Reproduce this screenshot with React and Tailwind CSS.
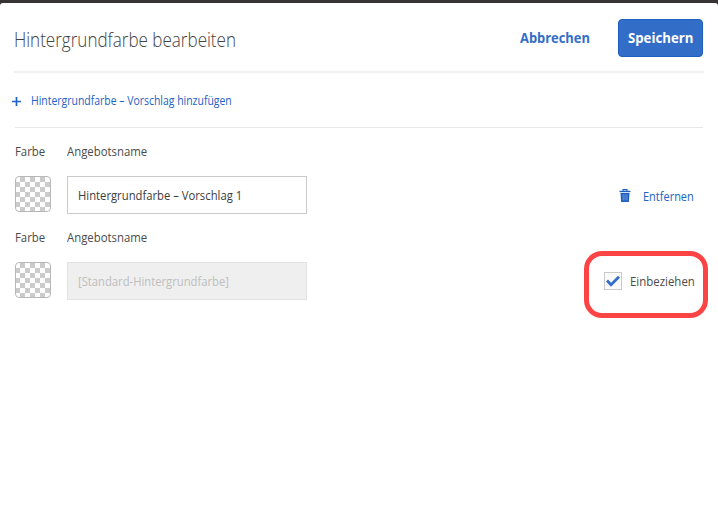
import { useLayoutEffect, useRef, useState } from "react";

// Condenses a line of text horizontally so that it fills its box.
function Fit({ className = "", children }) {
  const box = useRef(null);
  const text = useRef(null);
  const [scale, setScale] = useState(1);
  useLayoutEffect(() => {
    setScale(box.current.clientWidth / text.current.offsetWidth);
  }, []);
  return (
    <span ref={box} className={`block shrink-0 whitespace-nowrap ${className}`}>
      <span ref={text} className="inline-block origin-left" style={{ transform: `scaleX(${scale})` }}>
        {children}
      </span>
    </span>
  );
}

function Swatch() {
  return (
    <div className="h-9 w-9 shrink-0 overflow-hidden rounded-[4px] border border-[#b8b8b8] bg-[conic-gradient(#cbcbcb_25%,#fff_0_50%,#cbcbcb_0_75%,#fff_0)] bg-[length:10px_10px] bg-[position:-1px_0px]" />
  );
}

function Labels() {
  return (
    <div className="flex h-6 items-center pl-[15px] text-[12.5px] leading-6 text-[#4b4b4b]">
      <Fit className="w-[30px]">Farbe</Fit>
      <Fit className="ml-[22px] w-[80px]">Angebotsname</Fit>
    </div>
  );
}

function TrashIcon() {
  return (
    <svg className="h-[13px] w-[12px] shrink-0" viewBox="0 0 12 13" fill="none">
      <path d="M4 2V.6h4V2" stroke="#1d5fc0" strokeWidth="1.1" />
      <path d="M.5 1.8h11v1.4H.5z" fill="#1d5fc0" />
      <path d="M1.5 4h9l-.6 9H2.1z" fill="#1d5fc0" />
      <path d="M4.1 5.3v6.2M6 5.3v6.2M7.9 5.3v6.2" stroke="#8fb2e6" strokeWidth=".7" />
    </svg>
  );
}

export default function App() {
  return (
    <div className="h-[527px] w-[718px] overflow-hidden bg-[#363434] pt-[3px] font-['Open_Sans',sans-serif]">
      <div className="h-[524px] rounded-t-[3px] bg-white">
        <header className="ml-[14px] flex h-[70px] w-[690px] border-b-2 border-[#f1f1f1]">
          <h1 className="mt-[17px] text-[19.5px] leading-10 font-light text-[#424242]">
            <Fit className="w-[222px]">Hintergrundfarbe bearbeiten</Fit>
          </h1>
          <button className="mt-4 ml-[284px] h-[38px] pb-[2px] text-[14px] font-bold text-[#326ec8]">
            <Fit className="w-[70px] text-left">Abbrechen</Fit>
          </button>
          <button className="mt-4 ml-7 flex h-[38px] w-[85px] items-center rounded-[4px] border border-[#1f5fbf] bg-[#326ec8] pb-[2px] pl-[9px] text-[14px] font-bold text-white">
            <Fit className="w-[65px] text-left">Speichern</Fit>
          </button>
        </header>

        <div className="ml-[15px] flex h-[55px] w-[688px] items-center border-b border-[#e8e8e8] pt-[2px] text-[#1d62c4]">
          <svg className="-ml-[3px] h-[9px] w-[9px] shrink-0" viewBox="0 0 9 9">
            <path d="M4.5 0v9M0 4.5h9" stroke="#1d62c4" strokeWidth="1.7" />
          </svg>
          <Fit className="ml-[10px] w-[201px] text-[12px] font-medium">Hintergrundfarbe – Vorschlag hinzufügen</Fit>
        </div>

        <div className="pt-3">
          <Labels />
        </div>
        <div className="mt-3 flex h-[38px] pl-[15px]">
          <Swatch />
          <div className="ml-4 flex w-60 items-center border border-[#cacaca] pt-[2px] pl-[10px] text-[12.5px] text-[#3c3c3c]">
            <Fit className="w-[164px]">Hintergrundfarbe – Vorschlag 1</Fit>
          </div>
          <div className="ml-[312px] flex items-center pt-[4px] text-[12.5px] text-[#2063c4]">
            <div className="-mt-1">
              <TrashIcon />
            </div>
            <Fit className="ml-[12px] w-[51px]">Entfernen</Fit>
          </div>
        </div>

        <div className="mt-3">
          <Labels />
        </div>
        <div className="mt-3 flex pl-[15px]">
          <Swatch />
          <div className="ml-4 flex h-[38px] w-60 items-center border border-[#e2e2e2] bg-[#efefef] pt-[2px] pl-[10px] text-[12.5px] font-medium text-[#bebebe]">
            <Fit className="w-[151px]">[Standard-Hintergrundfarbe]</Fit>
          </div>
          <div className="-mt-[11px] ml-[277px] flex h-[67px] w-[124px] items-start rounded-[18px] border-[5px] border-[#fc4444] pt-4 pl-[15px] text-[12.5px] leading-[18px] text-[#4b4b4b]">
            <div className="flex h-[18px] w-[18px] shrink-0 items-center justify-center border border-[#cacaca] bg-[#fafafa]">
              <svg className="h-4 w-4 shrink-0" viewBox="0 0 16 16" fill="none">
                <path d="M2 7.6l4 4.1L14 3.8" stroke="#326ec8" strokeWidth="2.8" />
              </svg>
            </div>
            <Fit className="mt-px ml-2 w-[65px]">Einbeziehen</Fit>
          </div>
        </div>
      </div>
    </div>
  );
}
